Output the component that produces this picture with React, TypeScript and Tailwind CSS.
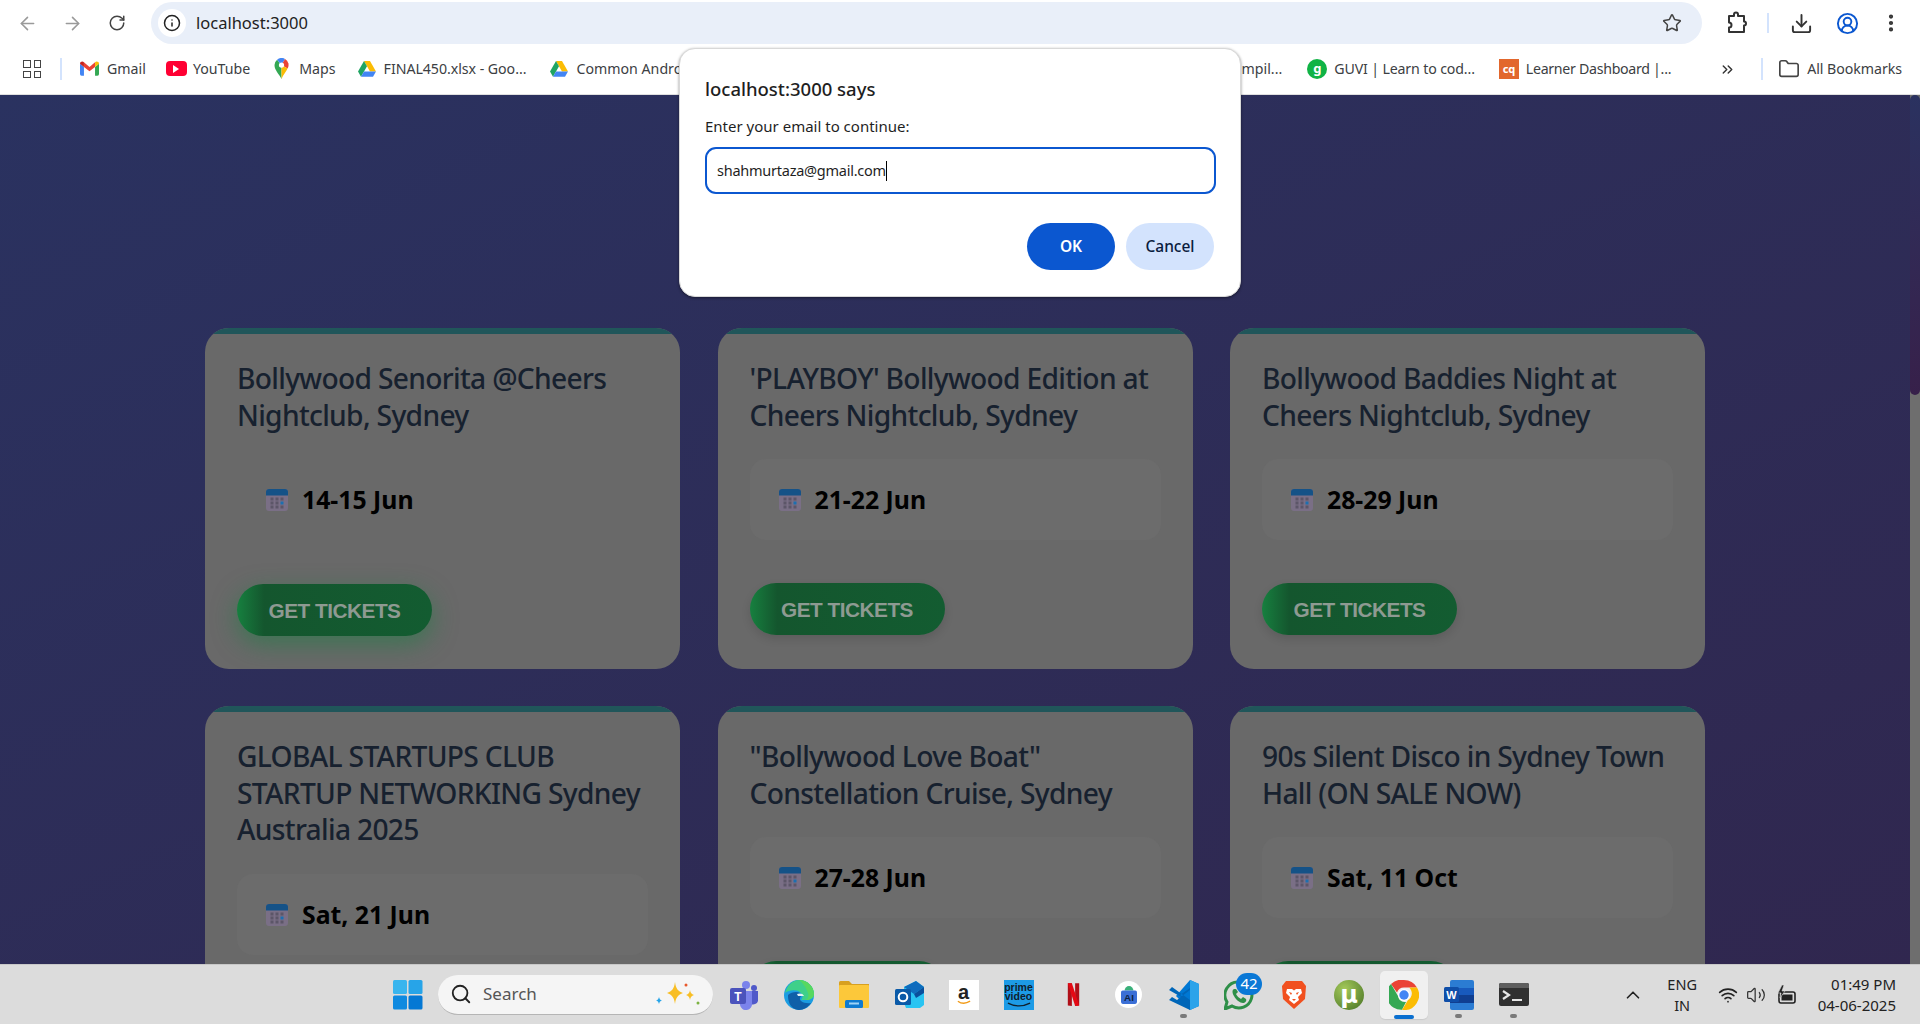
import React from "react";
import { ArrowLeft, ArrowRight, RotateCw, Info, Star, Download, CircleUserRound, EllipsisVertical, Folder, ChevronsRight, ChevronUp, Search, Wifi, Volume2 } from "lucide-react";

const sans = "font-['Noto_Sans','Open_Sans',sans-serif]";

function Drive() {
  return (
    <svg viewBox="0 0 24 22" className="w-[18px] h-[17px]">
      <path d="M8 1h8l8 14h-8z" fill="#fbbc04" />
      <path d="M8 1 0 15l4 7 8-14z" fill="#1fa463" />
      <path d="M4 22h16l4-7H8z" fill="#4285f4" />
    </svg>
  );
}

function Bookmark({ icon, label, className = "" }: { icon: React.ReactNode; label: string; className?: string }) {
  return (
    <div className={`flex items-center whitespace-nowrap shrink-0 text-[14.2px] text-[#3c4043] ${className}`}>
      {icon}
      <span>{label}</span>
    </div>
  );
}

function TopBar() {
  return (
    <div className="bg-white h-[46px] flex items-center shrink-0">
      <div className="w-[150px] flex items-center pl-[17px] gap-[24px]">
        <ArrowLeft size={21} strokeWidth={1.8} className="text-[#9a9a9a]" />
        <ArrowRight size={21} strokeWidth={1.8} className="text-[#9a9a9a]" />
        <RotateCw size={18} strokeWidth={2} className="text-[#444] ml-[1px]" />
      </div>
      <div className="w-[1551px] h-[42px] ml-[1px] rounded-full bg-[#e9eff9] flex items-center pl-[7px] pr-[20px]">
        <div className="w-[28px] h-[28px] rounded-full bg-white flex items-center justify-center">
          <Info size={18} strokeWidth={2} className="text-[#222]" />
        </div>
        <span className="ml-[10px] text-[16.5px] text-[#222]">localhost:3000</span>
        <Star size={20} strokeWidth={1.8} className="ml-auto text-[#444]" />
      </div>
      <div className="flex-1 flex items-center pl-[23px]">
        <svg viewBox="0 0 24 24" className="w-[24px] h-[24px]" fill="none" stroke="#333" strokeWidth="2">
          <path d="M4 5h5V3.500a2 2 0 0 1 4 0V5h6v5.500a2 2 0 0 1 0 4V21H4v-4.500a2.500 2.500 0 0 0 0-5z" strokeLinejoin="round" />
        </svg>
        <div className="w-[2px] h-[20px] bg-[#d3e3fd] ml-[18px]" />
        <Download size={23} strokeWidth={2} className="text-[#333] ml-[21px]" />
        <CircleUserRound size={23} strokeWidth={2} className="text-[#0b57d0] ml-[23px]" />
        <EllipsisVertical size={22} strokeWidth={2.6} className="text-[#333] ml-[21px]" />
      </div>
    </div>
  );
}

function BookmarksBar() {
  return (
    <div className="bg-white h-[49px] flex items-center shrink-0 pl-[23px] pb-[2px] border-b border-[#e0e0e0]">
      <div className="grid grid-cols-2 gap-[3px] w-[18px] shrink-0">
        {[0, 1, 2, 3].map((i) => (
          <div key={i} className="h-[7.5px] border-[1.8px] border-[#444]" />
        ))}
      </div>
      <div className="w-[2px] h-[22px] bg-[#d3e3fd] ml-[19px] shrink-0" />
      <Bookmark
        className="ml-[18px]"
        label="Gmail"
        icon={
          <svg viewBox="0 0 24 18" className="w-[19px] h-[15px] mr-[8px]">
            <path d="M0 3v13a2 2 0 0 0 2 2h3V7z" fill="#4285f4" />
            <path d="M24 3v13a2 2 0 0 1-2 2h-3V7z" fill="#34a853" />
            <path d="M5 7V1l7 6 7-6v6l-7 5.500z" fill="#ea4335" />
            <path d="M0 3c0-2.500 3-3.500 5-2v6z" fill="#c5221f" />
            <path d="M24 3c0-2.500-3-3.500-5-2v6z" fill="#fbbc04" />
          </svg>
        }
      />
      <Bookmark
        className="ml-[20px]"
        label="YouTube"
        icon={
          <div className="w-[21px] h-[15px] mr-[6px] rounded-[4px] bg-[#ff0033] flex items-center justify-center">
            <div className="w-0 h-0 border-y-[4px] border-y-transparent border-l-[6px] border-l-white" />
          </div>
        }
      />
      <Bookmark
        className="ml-[24px]"
        label="Maps"
        icon={
          <svg viewBox="0 0 16 24" className="w-[15px] h-[21px] mr-[10px]">
            <path d="M8 24C5 18 0 14 0 8a8 8 0 0 1 3-6l5 6z" fill="#34a853" />
            <path d="M3 2a8 8 0 0 1 9-1L8 8z" fill="#4285f4" />
            <path d="M12 1a8 8 0 0 1 3 11L8 8z" fill="#ea4335" />
            <path d="M15 12c-2 4-5 7-7 12V8z" fill="#fbbc04" />
            <circle cx="8" cy="8" r="3" fill="#fff" />
          </svg>
        }
      />
      <Bookmark className="ml-[22px] tracking-[-0.05px]" label="FINAL450.xlsx - Goo..." icon={<span className="mr-[8px] flex"><Drive /></span>} />
      <Bookmark className="ml-[24px]" label="Common Android" icon={<span className="mr-[8px] flex"><Drive /></span>} />
      <div className="ml-auto flex items-center pr-[18px]">
        <span className="text-[14.2px] text-[#3c4043]">mpil...</span>
        <Bookmark
          className="ml-[25px] tracking-[-0.15px]"
          label="GUVI | Learn to cod..."
          icon={
            <div className="w-[20px] h-[20px] mr-[7px] rounded-full bg-[#10b345] flex items-center justify-center text-white text-[13px] font-bold leading-none">g</div>
          }
        />
        <Bookmark
          className="ml-[24px] tracking-[-0.3px]"
          label="Learner Dashboard |..."
          icon={
            <div className="w-[20px] h-[20px] mr-[7px] bg-[#e2672d] flex items-center justify-center text-white text-[11px] font-bold leading-none">cq</div>
          }
        />
        <ChevronsRight size={17} strokeWidth={2} className="text-[#333] ml-[48px]" />
        <div className="w-[2px] h-[22px] bg-[#d3e3fd] ml-[25px]" />
        <Folder size={22} strokeWidth={1.8} className="text-[#444] ml-[15px]" />
        <span className="ml-[7px] text-[14.2px] tracking-[-0.05px] text-[#3c4043]">All Bookmarks</span>
      </div>
    </div>
  );
}

function CalendarIcon() {
  return (
    <svg viewBox="0 0 22 22" className="w-[22px] h-[22px] shrink-0">
      <rect x="0" y="0" width="22" height="22" rx="3" fill="#7a6f86" />
      <path d="M0 6.500V3a3 3 0 0 1 3-3h16a3 3 0 0 1 3 3v3.500z" fill="#155287" />
      {[4.5, 9.5, 14.5].map((x) =>
        [8.5, 12.5, 16.5].map((y) => (
          <rect key={`${x}-${y}`} x={x} y={y} width="3" height="3" fill={x === 14.5 && y === 12.5 ? "#1c6fb0" : "#5c5668"} />
        ))
      )}
    </svg>
  );
}

const events = [
  { title: "Bollywood Senorita @Cheers Nightclub, Sydney", date: "14-15 Jun", hover: true, cta: "GET TICKETS" },
  { title: "'PLAYBOY' Bollywood Edition at Cheers Nightclub, Sydney", date: "21-22 Jun", cta: "GET TICKETS" },
  { title: "Bollywood Baddies Night at Cheers Nightclub, Sydney", date: "28-29 Jun", cta: "GET TICKETS" },
  { title: "GLOBAL STARTUPS CLUB STARTUP NETWORKING Sydney Australia 2025", date: "Sat, 21 Jun" },
  { title: "\"Bollywood Love Boat\" Constellation Cruise, Sydney", date: "27-28 Jun" },
  { title: "90s Silent Disco in Sydney Town Hall (ON SALE NOW)", date: "Sat, 11 Oct" },
];

function Card({ title, date, hover, cta }: { title: string; date: string; hover?: boolean; cta?: string }) {
  return (
    <div className="w-[475px] h-[341px] rounded-[24px] bg-[#696969] overflow-hidden flex flex-col shrink-0 relative">
      <div className="h-[6px] bg-[#20565a] shrink-0" />
      <div className="px-[32px] pt-[26px] flex flex-col">
        <h3 className="text-[28.2px] leading-[36.700px] tracking-[-0.68px] text-[#17212f] font-medium">{title}</h3>
        <div className={`mt-[26px] h-[81px] rounded-[16px] flex items-center pl-[29px] gap-[14px] ${hover ? "" : "bg-[#6c6c6c]"}`}>
          <CalendarIcon />
          <span className="text-[24.8px] font-bold text-black">{date}</span>
        </div>
        <button className={`mt-[43px] w-[195px] h-[52px] shrink-0 rounded-full flex items-center justify-center text-[20.8px] font-bold text-[#8e9a92] font-['Liberation_Sans',sans-serif] tracking-[-0.5px] bg-gradient-to-r from-[#16803f] via-[#14562e] via-[14%] to-[#135c31] ${hover ? "translate-y-[1px] shadow-[0_8px_24px_rgba(22,128,63,0.55)]" : "shadow-[0_4px_10px_rgba(0,0,0,0.12)]"}`}>
          {cta}
        </button>
      </div>
    </div>
  );
}

function Page() {
  return (
    <div className="h-[869px] overflow-hidden flex bg-gradient-to-br from-[#2a3260] to-[#30274f]">
      <div className="flex-1 pl-[205px] pt-[233px]">
        <div className="grid grid-cols-[475px_475px_475px] gap-x-[37.500px] gap-y-[37px]">
          {events.map((e) => (
            <Card key={e.title} {...e} />
          ))}
        </div>
      </div>
      <div className="w-[10px] bg-[#6e6e6e] shrink-0">
        <div className="h-[300px] rounded-full bg-gradient-to-b from-[#2a3260] to-[#37204a]" />
      </div>
    </div>
  );
}

function Dialog() {
  return (
    <div className="absolute left-[679px] top-[48px] w-[562px] h-[249px] bg-white rounded-[16px] border border-[#d8d8d8] shadow-[0_1px_3px_rgba(0,0,0,0.45)] px-[25px] pt-[27px]">
      <div className="text-[18.500px] leading-[26px] font-medium text-[#1f1f1f]">localhost:3000 says</div>
      <div className="mt-[14px] text-[15px] leading-[20px] text-[#1f1f1f]">Enter your email to continue:</div>
      <div className="mt-[11px] h-[47px] w-[511px] rounded-[11px] border-[2.500px] border-[#0b57d0] flex items-center pl-[10px] text-[14.500px] tracking-[-0.25px] text-[#1f1f1f]">
        shahmurtaza@gmail.com<span className="w-[1px] h-[20px] bg-black" />
      </div>
      <div className="mt-[29px] flex justify-end gap-[11px] pr-[1px]">
        <button className="w-[88px] h-[47px] rounded-full bg-[#0b57d0] text-white text-[15.500px] font-semibold">OK</button>
        <button className="w-[88px] h-[47px] rounded-full bg-[#d3e3fd] text-[#0a1c3e] text-[15.500px] font-medium">Cancel</button>
      </div>
    </div>
  );
}

function TaskIcon({ children, active, dot }: { children: React.ReactNode; active?: boolean; dot?: boolean }) {
  return (
    <div className={`h-[48px] flex items-center justify-center relative shrink-0 rounded-[5px] ${active ? "w-[48px] mx-[3.500px] bg-[#f0f0f0] shadow-[0_1px_1px_rgba(0,0,0,0.08)]" : "w-[55px]"}`}>
      {children}
      {dot && <div className="absolute bottom-[1px] w-[7px] h-[4px] rounded-full bg-[#7a7a7a]" />}
      {active && <div className="absolute bottom-[0px] w-[20px] h-[4px] rounded-full bg-[#0a6fcf]" />}
    </div>
  );
}

const I = "w-[30px] h-[30px]";

function Taskbar() {
  return (
    <div className="h-[60px] bg-[#dcdcdc] border-t border-[#c8c8c8] flex items-center pl-[380px] shrink-0">
      <TaskIcon>
        <svg viewBox="0 0 30 30" className={I}>
          <rect x="0" y="0" width="14" height="14" rx="1.500" fill="#39b5ee" />
          <rect x="15.500" y="0" width="14" height="14" rx="1.500" fill="#27a4e8" />
          <rect x="0" y="15.500" width="14" height="14" rx="1.500" fill="#0f8ae0" />
          <rect x="15.500" y="15.500" width="14" height="14" rx="1.500" fill="#0478d4" />
        </svg>
      </TaskIcon>
      <div className="ml-[3px] w-[275px] h-[40px] rounded-full bg-[#f5f5f5] border-b border-[#b5b5b5] flex items-center pl-[12px] pr-[10px] shrink-0">
        <Search size={22} strokeWidth={2} className="text-[#222]" />
        <span className="ml-[11px] text-[17px] text-[#555]">Search</span>
        <svg viewBox="0 0 48 30" className="ml-auto w-[48px] h-[30px]">
          <path d="M20 3c1 7 3 9 8 11-5 2-7 4-8 11-1-7-3-9-8-11 5-2 7-4 8-11z" fill="#f8be25" />
          <path d="M35 11c.5 3 1.500 4 4 5-2.500 1-3.500 2-4 5-.5-3-1.500-4-4-5 2.500-1 3.500-2 4-5z" fill="#f8be25" />
          <path d="M4 18c.5 2 1 3 3 3.500-2 .5-2.500 1.500-3 3.500-.5-2-1-3-3-3.500 2-.5 2.500-1.500 3-3.500z" fill="#27a4e8" />
          <circle cx="31" cy="6" r="1.500" fill="#e8582c" />
          <circle cx="43" cy="24" r="1.500" fill="#7cb342" />
        </svg>
      </div>
      <div className="ml-[3px] flex shrink-0">
        <TaskIcon>
          <svg viewBox="0 0 30 30" className={I}>
            <circle cx="17" cy="5" r="4" fill="#7b83eb" />
            <circle cx="25" cy="8" r="3" fill="#5059c9" />
            <path d="M19 11h10v10a5 5 0 0 1-7 3z" fill="#5059c9" />
            <path d="M9 11h14v12a6 6 0 0 1-12 2z" fill="#7b83eb" />
            <rect x="1" y="8" width="16" height="16" rx="2" fill="#4b53bc" />
            <text x="9" y="21" textAnchor="middle" fontSize="12" fontWeight="700" fill="#fff" fontFamily="Liberation Sans, sans-serif">T</text>
          </svg>
        </TaskIcon>
        <TaskIcon>
          <svg viewBox="0 0 30 30" className={I}>
            <circle cx="15" cy="15" r="15" fill="#1b9de2" />
            <path d="M1 13C3 5 9 0 15 0c9 0 15 7 15 14 0 4-4 6-8 6h-5c2-2 2-5 0-7-4-4-12-3-16 0z" fill="#3ed08a" />
            <path d="M15 0c9 0 15 7 15 14 0 4-4 6-8 6h-1c3-1 4-4 3-7C22 7 18 2 15 0z" fill="#57d860" />
            <path d="M4 15c3-3 9-4 12-2 2 2 1 3 0 5-1 3 4 6 11 5-3 4-7 7-12 7-5 0-9-4-10-8-1-3-1-5-1-7z" fill="#0f5fa8" />
            <path d="M13 14c2-1 6-1 7 2h-6z" fill="#dff3f5" />
          </svg>
        </TaskIcon>
        <TaskIcon>
          <svg viewBox="0 0 30 27" className="w-[30px] h-[27px]">
            <path d="M0 1.500A1.500 1.500 0 0 1 1.500 0H10l3 3h17v8H0z" fill="#d8a020" />
            <rect x="0" y="4" width="30" height="23" rx="1" fill="#fcc83a" />
            <rect x="6" y="19" width="18" height="8" rx="1.500" fill="#0f7bd1" />
            <rect x="10" y="21.500" width="10" height="2" fill="#9fd4f7" />
          </svg>
        </TaskIcon>
        <TaskIcon>
          <svg viewBox="0 0 30 30" className={I}>
            <path d="M10 7 22 1l8 6v18l-4 3H12l-2-5z" fill="#28c4f2" />
            <path d="M10 7 22 1l8 6-10 7z" fill="#0f6cbd" />
            <path d="M20 14l10-7v6l-8 5z" fill="#0a4f9c" />
            <rect x="1" y="9" width="16" height="16" rx="1.500" fill="#0a5aa8" />
            <circle cx="9" cy="17" r="4.300" fill="none" stroke="#fff" strokeWidth="2" />
          </svg>
        </TaskIcon>
        <TaskIcon>
          <div className="w-[30px] h-[30px] bg-white flex flex-col items-center justify-center leading-none">
            <span className="text-[20px] font-bold text-[#222] leading-[16px] font-['Liberation_Sans',sans-serif]">a</span>
            <svg viewBox="0 0 16 5" className="w-[14px] h-[5px]"><path d="M1 1c4 3 9 3 14 0" fill="none" stroke="#f29b18" strokeWidth="1.500" /></svg>
          </div>
        </TaskIcon>
        <TaskIcon>
          <div className="w-[30px] h-[30px] bg-[#1d9be6] flex flex-col items-center justify-center text-[10.500px] font-bold leading-[9.500px] text-[#10202c] font-['Liberation_Sans',sans-serif]">
            <span>prime</span>
            <span>video</span>
            <svg viewBox="0 0 26 5" className="w-[24px] h-[5px]"><path d="M1 1c8 4 16 4 24 0" fill="none" stroke="#10202c" strokeWidth="1.500" /></svg>
          </div>
        </TaskIcon>
        <TaskIcon>
          <svg viewBox="0 0 16 28" className="w-[13px] h-[23px]">
            <path d="M1 0h5v28l-5-.5z" fill="#b00f18" />
            <path d="M10 0h5v27.500l-5 .5z" fill="#b00f18" />
            <path d="M1 0h5l9 27.500-5 .5z" fill="#e50914" />
          </svg>
        </TaskIcon>
        <TaskIcon>
          <div className="w-[27px] h-[27px] rounded-full bg-white flex items-center justify-center">
            <svg viewBox="0 0 18 20" className="w-[16px] h-[18px]">
              <path d="M4 5a5 5 0 0 1 10 0z" fill="#3ab07a" />
              <rect x="0" y="5" width="18" height="15" rx="2" fill="#3b6fd6" />
              <text x="9" y="17" textAnchor="middle" fontSize="11" fontWeight="700" fill="#0d2342" fontFamily="Liberation Sans, sans-serif">AI</text>
            </svg>
          </div>
        </TaskIcon>
        <TaskIcon dot>
          <svg viewBox="0 0 30 30" className={I}>
            <path d="M21 0 30 4v22l-9 4L7 16z" fill="#0078d4" />
            <path d="M21 0 30 4v22l-9 4z" fill="#2ba3ea" />
            <path d="M21 8 11 15l10 7v8L0 20l3-3 5 3 13-10zM0 10l3-3 18 13v2z" fill="#0066b8" />
          </svg>
        </TaskIcon>
        <TaskIcon>
          <svg viewBox="0 0 30 30" className={I}>
            <path d="M15 2a13 13 0 1 1-7 24L1 29l2-7A13 13 0 0 1 15 2z" fill="none" stroke="#2e8f48" strokeWidth="3" />
            <path d="M10 9c-2 1-2 4 0 7 2 4 6 7 9 7 2 0 4-2 3-4l-3-2-2 2c-2-1-4-3-5-5l2-2-2-3z" fill="#2e8f48" />
          </svg>
          <div className="absolute top-[2px] left-[25px] w-[26px] h-[22px] rounded-full bg-[#0a78d6] text-white text-[15px] leading-none flex items-center justify-center">42</div>
        </TaskIcon>
        <TaskIcon>
          <svg viewBox="0 0 30 30" className={I}>
            <path d="M7 1h16l4 5-1 13-11 10L4 19 3 6z" fill="#f1501f" />
            <path d="M8 9h5l2 1.500L17 9h5l1 4-4 4 1 3-5 4-5-4 1-3-4-4z" fill="#fff" />
            <path d="M10 12l3 1-1 2zM20 12l-3 1 1 2zM13 19h4l-2 2z" fill="#f1501f" />
          </svg>
        </TaskIcon>
        <TaskIcon>
          <svg viewBox="0 0 30 30" className={I}>
            <defs>
              <radialGradient id="ut" cx="35%" cy="30%" r="80%">
                <stop offset="0%" stopColor="#a4c95a" />
                <stop offset="100%" stopColor="#557f2c" />
              </radialGradient>
            </defs>
            <circle cx="15" cy="15" r="15" fill="url(#ut)" />
            <text x="15" y="23" textAnchor="middle" fontSize="24" fontWeight="700" fill="#fff" fontFamily="DejaVu Sans, sans-serif">µ</text>
          </svg>
        </TaskIcon>
        <TaskIcon active>
          <svg viewBox="0 0 30 30" className={I}>
            <path d="M15 0a15 15 0 0 1 13 7.500H15a7.500 7.500 0 0 0-7 5L2 4a15 15 0 0 1 13-4z" fill="#ea4335" />
            <path d="M2 4l7 12a7 7 0 0 0 8 6l-4 7.800A15 15 0 0 1 2 4z" fill="#34a853" />
            <path d="M28 7.500a15 15 0 0 1-15 22.400l6-10a7.500 7.500 0 0 0 1-12.400z" fill="#fbbc04" />
            <circle cx="15" cy="15" r="6" fill="#fff" />
            <circle cx="15" cy="15" r="4.700" fill="#4285f4" />
          </svg>
        </TaskIcon>
        <TaskIcon dot>
          <svg viewBox="0 0 30 30" className={I}>
            <rect x="6" y="0" width="24" height="30" rx="2" fill="#2b7cd3" />
            <rect x="6" y="8" width="24" height="7" fill="#185abd" />
            <rect x="6" y="15" width="24" height="8" fill="#103f91" />
            <rect x="0" y="7" width="15" height="15" rx="1.500" fill="#0f4ea8" />
            <text x="7.500" y="19" textAnchor="middle" fontSize="11" fontWeight="700" fill="#fff" fontFamily="Liberation Sans, sans-serif">W</text>
          </svg>
        </TaskIcon>
        <TaskIcon dot>
          <svg viewBox="0 0 30 23" className="w-[30px] h-[23px]">
            <rect x="0" y="0" width="30" height="23" rx="2" fill="#303030" />
            <path d="M0 2a2 2 0 0 1 2-2h26a2 2 0 0 1 2 2v3H0z" fill="#5e5e5e" />
            <path d="M4 8l6 4-6 4" fill="none" stroke="#e6e6e6" strokeWidth="2.200" />
            <rect x="13" y="16" width="10" height="2" fill="#e6e6e6" />
          </svg>
        </TaskIcon>
      </div>
      <div className="ml-auto flex items-center pr-[24px] text-[#222]">
        <ChevronUp size={22} strokeWidth={1.8} />
        <div className="ml-[23px] text-center text-[14.500px] leading-[21px]">
          <div>ENG</div>
          <div>IN</div>
        </div>
        <Wifi size={20} strokeWidth={2} className="ml-[21px]" />
        <Volume2 size={20} strokeWidth={1.5} className="ml-[8px] text-[#333]" />
        <svg viewBox="0 0 22 22" className="w-[22px] h-[22px] ml-[9px]">
          <rect x="4" y="8" width="16" height="11" rx="2" fill="none" stroke="#222" strokeWidth="1.600" />
          <rect x="6.500" y="10.500" width="11" height="6" fill="#222" />
          <path d="M7 1 3 9h3l-1 5 5-7H7l2-6z" fill="#222" stroke="#dcdcdc" strokeWidth="0.600" />
        </svg>
        <div className="ml-[17px] text-right text-[15px] leading-[21px] w-[82px]">
          <div>01:49 PM</div>
          <div>04-06-2025</div>
        </div>
      </div>
    </div>
  );
}

export default function App() {
  return (
    <div className={`relative w-[1920px] h-[1024px] overflow-hidden flex flex-col ${sans}`}>
      <TopBar />
      <BookmarksBar />
      <Page />
      <Taskbar />
      <Dialog />
    </div>
  );
}
